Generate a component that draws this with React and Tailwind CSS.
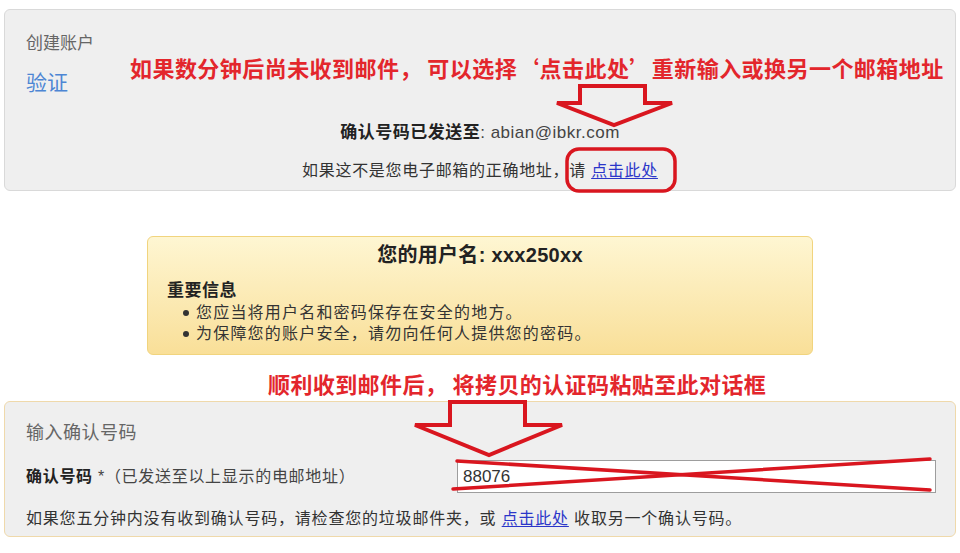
const cjk = { fontFamily: '"Liberation Sans", "Noto Sans CJK SC", sans-serif' };

// Red hand-drawn marks laid over the screenshot
function Annotations() {
  return (
    <>
      <div
        className="absolute left-[130px] top-[52px] text-[22px] leading-[30px] font-bold text-[#e3262c] tracking-[0.45px] whitespace-nowrap"
        style={{ fontFamily: '"Noto Sans CJK SC", sans-serif' }}
      >
        如果数分钟后尚未收到邮件， 可以选择‘点击此处’重新输入或换另一个邮箱地址
      </div>
      <div
        className="absolute left-[268px] top-[368px] text-[22px] leading-[30px] font-bold text-[#e3262c] tracking-[0.4px] whitespace-nowrap"
        style={{ fontFamily: '"Noto Sans CJK SC", sans-serif' }}
      >
        顺利收到邮件后， 将拷贝的认证码粘贴至此对话框
      </div>
      <svg
        className="absolute left-0 top-0 pointer-events-none"
        width="960"
        height="553"
        viewBox="0 0 960 553"
        fill="none"
        stroke="#d9161f"
        strokeWidth="4"
        strokeLinejoin="miter"
      >
        {/* arrow to the email line */}
        <path d="M580 86 H645 V103 H672 L614 125 L557 103 H580 Z" />
        {/* ring round the link */}
        <rect x="567" y="149" width="108" height="42" rx="12" strokeWidth="3.5" />
        {/* arrow to the input */}
        <path d="M450 402 H525 V425 H562 L489 455 L415 425 H450 Z" />
        {/* cross over the input */}
        <path d="M457 461 L930 490" strokeWidth="3.5" strokeLinecap="round" />
        <path d="M453 489 L930 459" strokeWidth="3.5" strokeLinecap="round" />
      </svg>
    </>
  );
}

export default function App() {
  return (
    <div
      className="relative w-[960px] h-[553px] overflow-hidden bg-white pt-[9px] px-[4px] text-[#333]"
      style={cjk}
    >
      {/* Create account / verify panel */}
      <div className="h-[182px] rounded-[6px] border border-[#d9d9d9] bg-[#efefef] pt-[22px] px-[21px] flex flex-col">
        <div className="text-[17px] leading-[24px] text-[#666]">创建账户</div>
        <div className="mt-[13px] text-[21px] leading-[28px] text-[#4d86d4]">验证</div>
        <div className="mt-[24px] text-center text-[16px] leading-[24px] tracking-[0.5px]">
          <span className="font-bold text-[17px] text-[#222]">确认号码已发送至</span>
          <span className="text-[17px] text-[#444]">: abian@ibkr.com</span>
        </div>
        <div className="mt-[14px] text-center text-[16px] leading-[24px] tracking-[0.7px] text-[#333]">
          如果这不是您电子邮箱的正确地址，请{" "}
          <span className="text-[#2b36c9] underline underline-offset-2">点击此处</span>
        </div>
      </div>

      {/* Username notice */}
      <div className="mx-auto mt-[45px] w-[666px] h-[119px] rounded-[6px] border border-[#f1d47e] bg-gradient-to-b from-[#fef6d2] to-[#f9df98] pt-[6px] px-[19px]">
        <div className="text-center text-[20px] leading-[24px] font-bold tracking-[0.3px] text-[#222]">
          您的用户名: xxx250xx
        </div>
        <div className="mt-[13px] text-[17px] leading-[22px] font-bold tracking-[0.5px] text-[#222]">重要信息</div>
        <ul className="text-[16px] leading-[21px] tracking-[1.2px] text-[#333]">
          <li className="flex items-center">
            <span className="ml-[16px] mr-[7px] w-[6px] h-[6px] rounded-full bg-[#333]" />
            您应当将用户名和密码保存在安全的地方。
          </li>
          <li className="flex items-center">
            <span className="ml-[16px] mr-[7px] w-[6px] h-[6px] rounded-full bg-[#333]" />
            为保障您的账户安全，请勿向任何人提供您的密码。
          </li>
        </ul>
      </div>

      {/* Enter confirmation code panel */}
      <div className="mt-[46px] h-[136px] rounded-[6px] border border-[#efd9ab] bg-[#efefef] pt-[18px] pl-[21px] pr-[19px]">
        <div className="text-[18px] leading-[26px] tracking-[0.5px] text-[#666]">输入确认号码</div>
        <div className="mt-[14px] flex items-center justify-between h-[33px]">
          <div className="text-[16px] leading-[24px] tracking-[0.7px] text-[#444]">
            <span className="font-bold text-[#222]">确认号码</span> *（已发送至以上显示的电邮地址）
          </div>
          <div className="w-[479px] h-[33px] bg-white border border-[#9d9d9d] flex items-center pl-[5px] text-[17px] text-[#333]">
            88076
          </div>
        </div>
        <div className="mt-[14px] text-[16px] leading-[24px] tracking-[0.8px] text-[#333]">
          如果您五分钟内没有收到确认号码，请检查您的垃圾邮件夹，或{" "}
          <span className="text-[#2b36c9] underline underline-offset-2">点击此处</span> 收取另一个确认号码。
        </div>
      </div>

      <Annotations />
    </div>
  );
}
